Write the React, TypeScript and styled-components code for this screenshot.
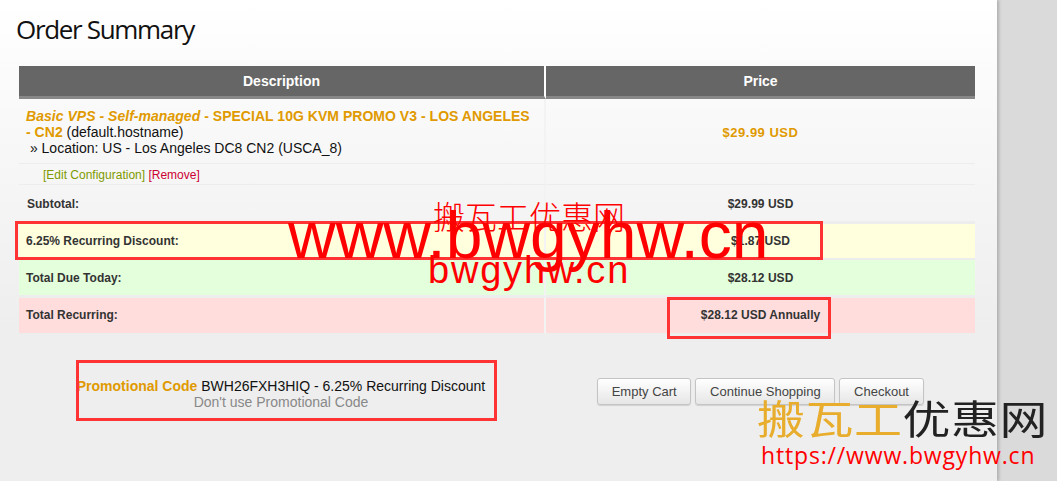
import styled, { createGlobalStyle } from "styled-components"

const GlobalStyle = createGlobalStyle`
  html, body {
    margin: 0;
    height: 481px;
    overflow: hidden;
    background: #dadada;
    font-family: "Liberation Sans", Arial, sans-serif;
  }
`

const Panel = styled.div`
  position: relative;
  box-sizing: border-box;
  width: 997px;
  height: 481px;
  padding: 10px 22px 0 19px;
  background: linear-gradient(#ffffff 0, #eeeeee 330px);
  box-shadow: 2px 0 3px rgba(0, 0, 0, 0.2);
`

const Title = styled.h1`
  margin: 0 0 17px -3px;
  font: 400 26px/39px "Open Sans", sans-serif;
  letter-spacing: -1.33px;
  color: #111;
`

const Table = styled.table`
  width: 956px;
  table-layout: fixed;
  border-collapse: separate;
  border-spacing: 0;
  font-size: 14px;
  color: #222;
`

const HeadCell = styled.th<{ $first?: boolean }>`
  width: ${(p) => (p.$first ? 525 : 429)}px;
  height: 30px;
  padding: 0;
  background: #666;
  border-bottom: 3px solid #888;
  border-right: ${(p) => (p.$first ? "2px solid #fff" : "0")};
  color: #fff;
  font-size: 14px;
  font-weight: 700;
`

const Cell = styled.td<{ $bg?: string; $h: number; $gap?: boolean; $line?: number }>`
  height: ${(p) => p.$h}px;
  padding: 0;
  background: ${(p) => p.$bg || "transparent"};
  border-bottom: ${(p) => p.$line ?? 1}px solid #ededed;
  border-right: ${(p) => (p.$gap ? "2px solid #f3f3f3" : "0")};
`

const ItemBody = styled.div`
  padding: 9px 8px 7px 7px;
  line-height: 16px;
  font-size: 14px;
  color: #111;
`

const ItemName = styled.span`
  color: #e09a00;
  font-weight: 700;
  letter-spacing: 0.03px;
`

// $up / $down nudge the text inside a vertically centred cell
const Price = styled.div<{ $gold?: boolean; $down?: boolean; $up?: boolean }>`
  padding: ${(p) => (p.$down ? 2 : 0)}px 0 ${(p) => (p.$up ? 2 : 0)}px;
  text-align: center;
  font-size: ${(p) => (p.$gold ? 13 : 12)}px;
  font-weight: 700;
  letter-spacing: ${(p) => (p.$gold ? 0.5 : 0.03)}px;
  color: ${(p) => (p.$gold ? "#e09a00" : "#333")};
`

const Links = styled.div`
  padding: 1px 0 0 24px;
  font-size: 12px;
`

const EditLink = styled.a`
  color: #7f9a00;
`

const RemoveLink = styled.a`
  color: #cc0033;
`

const Label = styled.div<{ $indent?: number; $down?: boolean; $up?: boolean }>`
  padding: ${(p) => (p.$down ? 2 : 0)}px 0 ${(p) => (p.$up ? 2 : 0)}px ${(p) => p.$indent ?? 7}px;
  font-size: 12px;
  font-weight: 700;
  color: #333;
`

const Footer = styled.div`
  display: flex;
  align-items: flex-start;
  margin-top: 44px;
`

const Promo = styled.div`
  width: 524px;
  text-align: center;
  font-size: 14px;
  line-height: 16px;
  color: #111;
`

const PromoName = styled.b`
  color: #e09a00;
`

const PromoOff = styled.div`
  color: #888;
`

const Buttons = styled.div`
  display: flex;
  gap: 4px;
  margin-left: 54px;
`

const Button = styled.button`
  height: 27px;
  padding: 0 13.7px;
  border: 1px solid #c4c4c4;
  border-radius: 3px;
  background: linear-gradient(#ffffff, #e6e6e6);
  box-shadow: 0 1px 1px rgba(0, 0, 0, 0.12);
  color: #444;
  font: 13px "Liberation Sans", Arial, sans-serif;
`

const RedBox = styled.div<{ $x: number; $y: number; $w: number; $h: number }>`
  position: absolute;
  left: ${(p) => p.$x}px;
  top: ${(p) => p.$y}px;
  width: ${(p) => p.$w}px;
  height: ${(p) => p.$h}px;
  box-sizing: border-box;
  border: 3px solid #ff3333;
`

const Mark = styled.div<{ $x: number; $y: number; $size: number; $thin?: boolean; $spacing?: number }>`
  position: absolute;
  left: ${(p) => p.$x}px;
  top: ${(p) => p.$y}px;
  font-size: ${(p) => p.$size}px;
  font-weight: ${(p) => (p.$thin ? 300 : 400)};
  line-height: 1;
  letter-spacing: ${(p) => p.$spacing ?? 0}px;
  color: #ff0000;
  white-space: nowrap;
  font-family: "Liberation Sans", "Noto Sans CJK SC", sans-serif;
`

const Logo = styled.div`
  position: absolute;
  left: 757px;
  top: 397px;
  font-family: "Noto Sans CJK SC", serif;
  font-size: 48px;
  font-weight: 400;
  line-height: 48px;
  letter-spacing: 0.5px;
  white-space: nowrap;
  color: #222;
  transform: scaleY(0.82);
  transform-origin: left top;
  filter: blur(0.4px);
`

const LogoGold = styled.span`
  color: #e8ad2c;
`

const LogoUrl = styled.div`
  position: absolute;
  left: 761px;
  top: 440px;
  font: 400 23px/30px "Open Sans", sans-serif;
  letter-spacing: 0.83px;
  color: #ff0000;
  white-space: nowrap;
`

export default function App() {
  return (
    <>
      <GlobalStyle />
      <Panel>
        <Title>Order Summary</Title>
        <Table>
          <thead>
            <tr>
              <HeadCell $first>Description</HeadCell>
              <HeadCell>Price</HeadCell>
            </tr>
          </thead>
          <tbody>
            <tr>
              <Cell $h={64} $gap>
                <ItemBody>
                  <ItemName><i>Basic VPS - Self-managed</i> - SPECIAL 10G KVM PROMO V3 - LOS ANGELES - CN2</ItemName> (default.hostname)
                  <br />
                  &nbsp;» Location: US - Los Angeles DC8 CN2 (USCA_8)
                </ItemBody>
              </Cell>
              <Cell $h={64}><Price $gold $down>$29.99 USD</Price></Cell>
            </tr>
            <tr>
              <Cell $h={20} $gap>
                <Links>
                  <EditLink>[Edit Configuration]</EditLink> <RemoveLink>[Remove]</RemoveLink>
                </Links>
              </Cell>
              <Cell $h={20} />
            </tr>
            <tr>
              <Cell $h={36} $gap $line={3}><Label $indent={8} $down>Subtotal:</Label></Cell>
              <Cell $h={36} $line={3}><Price $down>$29.99 USD</Price></Cell>
            </tr>
            <tr>
              <Cell $h={34} $bg="#ffffdd" $gap $line={2}><Label>6.25% Recurring Discount:</Label></Cell>
              <Cell $h={34} $bg="#ffffdd" $line={2}><Price>$1.87 USD</Price></Cell>
            </tr>
            <tr>
              <Cell $h={35} $bg="#e4ffdc" $gap $line={3}><Label>Total Due Today:</Label></Cell>
              <Cell $h={35} $bg="#e4ffdc" $line={3}><Price>$28.12 USD</Price></Cell>
            </tr>
            <tr>
              <Cell $h={35} $bg="#ffdddd" $gap><Label $up>Total Recurring:</Label></Cell>
              <Cell $h={35} $bg="#ffdddd"><Price $up>$28.12 USD Annually</Price></Cell>
            </tr>
          </tbody>
        </Table>
        <Footer>
          <Promo>
            <PromoName>Promotional Code</PromoName> BWH26FXH3HIQ - 6.25% Recurring Discount
            <PromoOff>Don't use Promotional Code</PromoOff>
          </Promo>
          <Buttons>
            <Button>Empty Cart</Button>
            <Button>Continue Shopping</Button>
            <Button>Checkout</Button>
          </Buttons>
        </Footer>
        <RedBox $x={15} $y={221} $w={808} $h={39} />
        <RedBox $x={667} $y={297} $w={164} $h={42} />
        <RedBox $x={76} $y={360} $w={421} $h={61} />
        <Mark $x={433} $y={202} $size={32} $thin>搬瓦工优惠网</Mark>
        <Mark $x={288} $y={202} $size={66}>www.bwgyhw.cn</Mark>
        <Mark $x={428} $y={251} $size={38} $spacing={1.8}>bwgyhw.cn</Mark>
      </Panel>
      <Logo><LogoGold>搬瓦工</LogoGold>优惠网</Logo>
      <LogoUrl>https://www.bwgyhw.cn</LogoUrl>
    </>
  )
}
